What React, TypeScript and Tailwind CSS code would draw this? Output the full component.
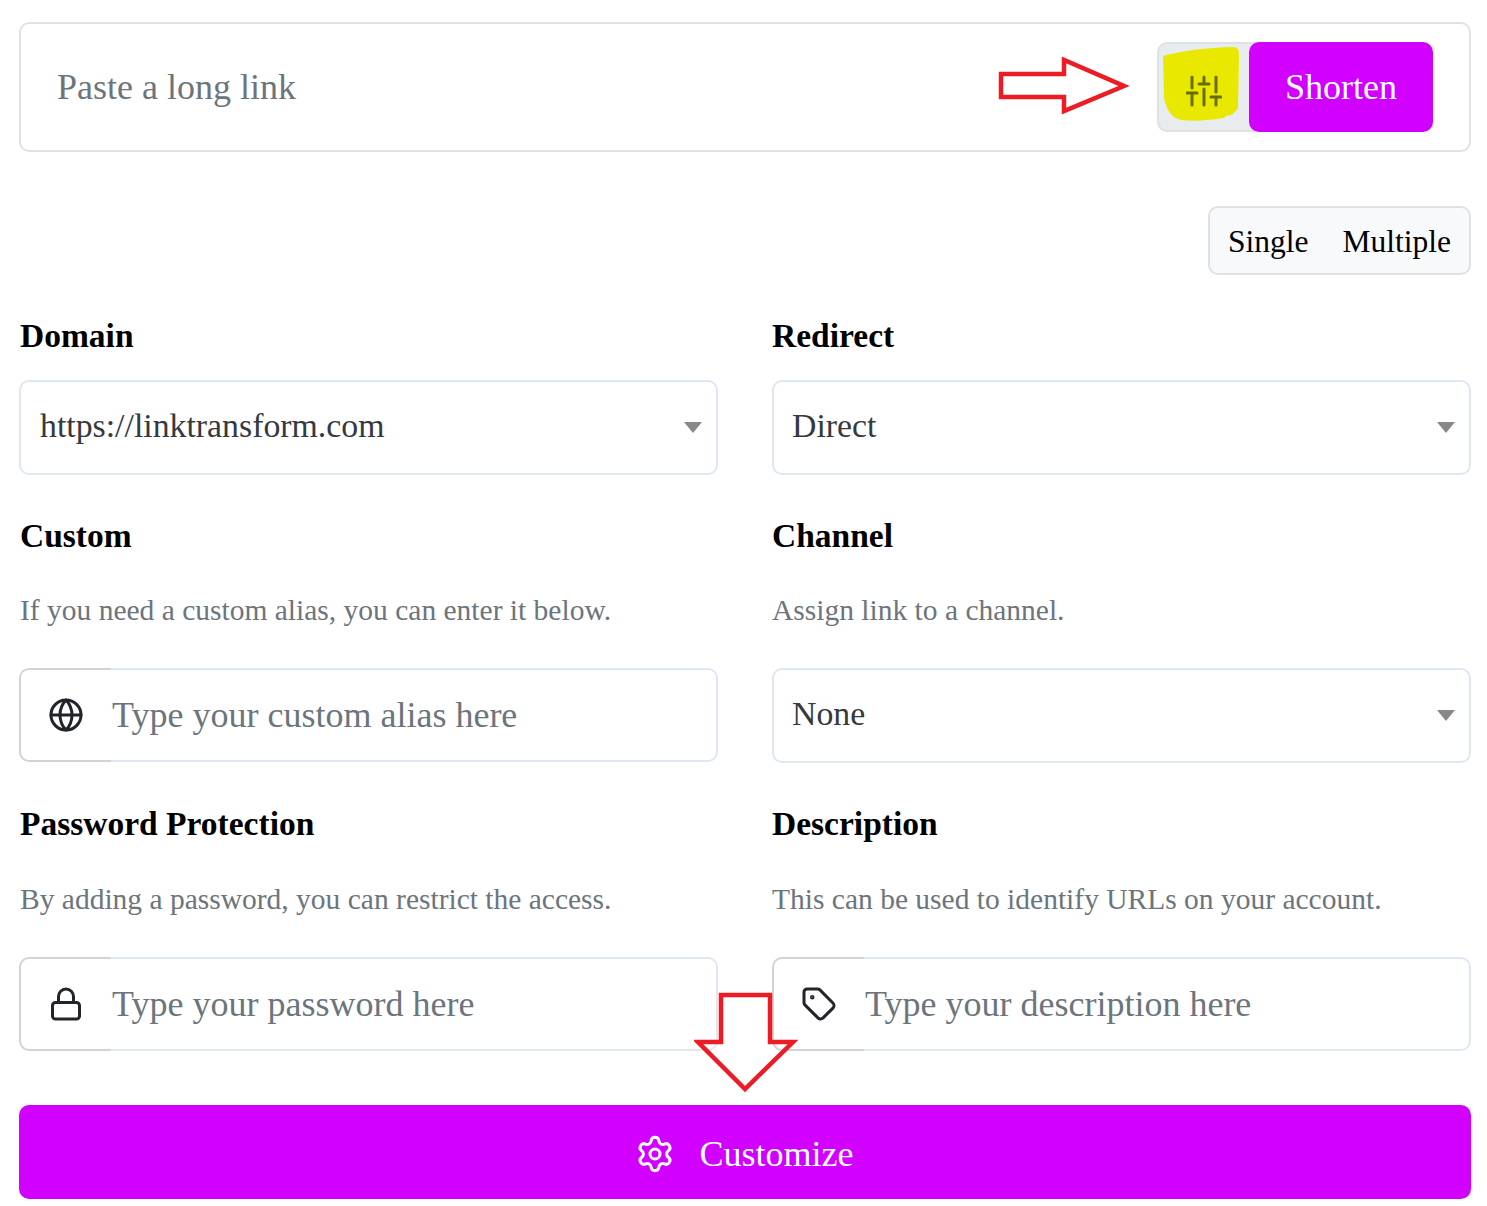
import React from 'react';
import { Globe, Lock, Settings, Tag } from 'lucide-react';

const Label = ({ children, className }: { children: React.ReactNode; className?: string }) => (
    <div className={`h-[40px] flex items-center text-[33.5px] font-bold text-black leading-none ${className ?? ''}`}>{children}</div>
);

const Help = ({ children, className }: { children: React.ReactNode; className?: string }) => (
    <div className={`h-[40px] flex items-center text-[29.5px] text-[#6c757d] leading-none whitespace-nowrap ${className ?? ''}`}>{children}</div>
);

const Select = ({ value, className }: { value: string; className?: string }) => (
    <div className={`h-[95px] flex items-center justify-between pr-[14px] border-2 border-[#dfe8f2] rounded-[10px] bg-white ${className ?? ''}`}>
        <span className="pb-[3px] text-[33.8px] text-[#343a40] leading-none">{value}</span>
        <span className="w-0 h-0 border-x-[9px] border-x-transparent border-t-[11px] border-t-[#888888]"></span>
    </div>
);

const IconInput = ({ icon, placeholder }: { icon: React.ReactNode; placeholder: string }) => (
    <div className="h-[94px] mt-[37px] flex">
        <div className="w-[92px] flex items-center justify-center border-y-2 border-l-2 border-[#ced4da] rounded-l-[10px] text-[#212529] bg-white">
            {icon}
        </div>
        <div className="flex-1 flex items-center pl-px border-y-2 border-r-2 border-[#dfe8f2] rounded-r-[10px] bg-white">
            <span className="text-[36px] text-[#6c757d] leading-none">{placeholder}</span>
        </div>
    </div>
);

const App = () => {
    return (
        <div className="relative w-[1487px] h-[1206px] bg-white overflow-hidden pt-[22px] pl-[19px] pr-[16px] font-['Liberation_Serif',serif]">
            <div className="h-[130px] flex items-center justify-between pl-[36px] pr-[36px] border-2 border-[#dee2e6] rounded-[10px]">
                <span className="text-[36px] text-[#6c757d] leading-none">Paste a long link</span>
                <div className="flex">
                    <div className="w-[98px] h-[90px] -mr-[6px] flex items-center justify-center bg-[#e9ecef] border-2 border-[#dee2e6] rounded-l-[10px]"></div>
                    <div className="relative w-[184px] h-[90px] flex items-center justify-center bg-[#d200ff] rounded-[10px] text-white text-[36px] leading-none">Shorten</div>
                </div>
            </div>

            <div className="mt-[54px] flex justify-end">
                <div className="h-[69px] flex items-center pt-[2px] bg-[#f8f9fa] border-2 border-[#dee2e6] rounded-[10px] text-[31.5px] text-black leading-none">
                    <span className="pl-[18px] pr-[17px]">Single</span>
                    <span className="pl-[17px] pr-[18px]">Multiple</span>
                </div>
            </div>

            <div className="mt-[41px] grid grid-cols-2 gap-x-[54px]">
                <div>
                    <Label className="pl-px">Domain</Label>
                    <Select value="https://linktransform.com" className="mt-[24px] pl-[19px]" />
                </div>
                <div>
                    <Label>Redirect</Label>
                    <Select value="Direct" className="mt-[24px] pl-[18px]" />
                </div>
                <div className="mt-[41px]">
                    <Label className="pl-px">Custom</Label>
                    <Help className="mt-[35px] pl-px">If you need a custom alias, you can enter it below.</Help>
                    <IconInput icon={<Globe size={36} />} placeholder="Type your custom alias here" />
                </div>
                <div className="mt-[41px]">
                    <Label>Channel</Label>
                    <Help className="mt-[35px]">Assign link to a channel.</Help>
                    <Select value="None" className="mt-[37px] pl-[18px]" />
                </div>
                <div className="mt-[41px]">
                    <Label className="pl-px">Password Protection</Label>
                    <Help className="mt-[36px] pl-px">By adding a password, you can restrict the access.</Help>
                    <IconInput icon={<Lock size={36} />} placeholder="Type your password here" />
                </div>
                <div className="mt-[41px]">
                    <Label>Description</Label>
                    <Help className="mt-[36px]">This can be used to identify URLs on your account.</Help>
                    <IconInput icon={<Tag size={36} />} placeholder="Type your description here" />
                </div>
            </div>

            <div className="mt-[54px] h-[94px] flex items-center justify-center gap-[25px] pt-[3px] pr-[2px] bg-[#d200ff] rounded-[10px] text-white text-[36px] leading-none">
                <Settings size={40} strokeWidth={1.8} />
                <span>Customize</span>
            </div>

            {/* annotations drawn over the page */}
            <svg className="absolute left-[1162px] top-[46px]" width="78" height="76" viewBox="0 0 78 76">
                <path d="M1 10 Q30 2 72 1 Q77 2 77 8 L76 62 Q72 69 64 70 L62 72 Q35 76 20 74 Q6 72 2 52 Z" fill="#e9e800" />
            </svg>
            {/* sliders icon: crossbars are wider than any package icon */}
            <svg className="absolute left-[1186px] top-[75px]" width="36" height="32" viewBox="0 0 36 32" fill="none" stroke="#6a6c00" strokeWidth="3" strokeLinecap="round">
                <path d="M6 2 V13 M1 18 H11 M6 18 V30" />
                <path d="M18 2 V9 M13 9 H23 M18 14 V30" />
                <path d="M30 2 V17 M25 22 H35 M30 22 V30" />
            </svg>
            <svg className="absolute left-[998px] top-[56px]" width="134" height="60" viewBox="0 0 134 60" fill="none">
                <path d="M3 18 H66 V4 L126 30 L66 55 V41 H3 Z" stroke="#ed1c24" strokeWidth="4.5" />
            </svg>
            <svg className="absolute left-[694px] top-[992px]" width="104" height="102" viewBox="0 0 104 102" fill="none">
                <path d="M27 3 H76 V50 H99 L51 97 L4 50 H27 Z" stroke="#ed1c24" strokeWidth="4.5" />
            </svg>
        </div>
    );
};

export default App;
